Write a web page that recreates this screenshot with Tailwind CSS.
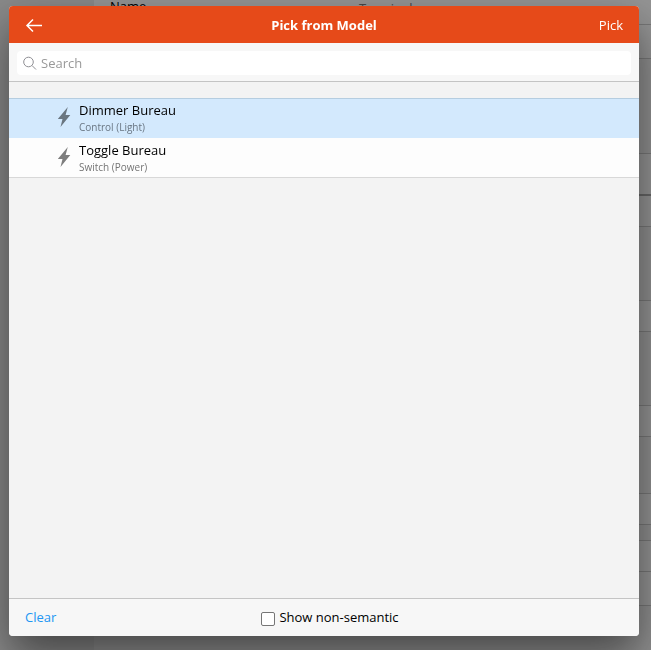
<!DOCTYPE html>
<html lang="en">
  <head>
    <meta charset="utf-8">
    <meta name="viewport" content="width=device-width, initial-scale=1">
    <title>Pick from Model</title>
    <script src="https://cdn.jsdelivr.net/npm/@tailwindcss/browser@4"></script>
  </head>
  <body class="h-screen overflow-hidden bg-[#efefef] font-['Open_Sans','Noto_Sans',sans-serif] text-[13px] text-black">
    <!-- settings page behind the popup -->
    <div class="flex h-full overflow-hidden">
      <aside class="w-[94px] shrink-0 bg-[#e4e4e4]"></aside>
      <main class="flex-1">
        <div class="flex h-[25px] items-start border-b border-[#c8c8c8] bg-[#f7f7f7] px-4 leading-3">
          <span class="w-[249px]">Name</span>
          <span class="pt-[2px] text-[#777]">Terminal</span>
        </div>
        <div class="h-[34px] border-b border-[#c8c8c8] bg-[#f7f7f7]"></div>
        <div class="mt-[94px] h-[43px] border-t border-b-2 border-t-[#c8c8c8] border-b-[#aaa] bg-[#f7f7f7]"></div>
        <div class="h-[31px] border-b border-[#c8c8c8] bg-[#f7f7f7]"></div>
        <div class="mt-[73px] h-8 border-y border-[#c8c8c8] bg-[#f7f7f7]"></div>
        <div class="mt-[73px] h-8 border-y border-[#c8c8c8] bg-[#f7f7f7]"></div>
        <div class="mt-14 h-8 border-y border-[#c8c8c8] bg-[#f7f7f7]"></div>
        <div class="mt-[15px] h-8 border-y border-[#c8c8c8] bg-[#f7f7f7]"></div>
        <div class="h-[34px] border-b border-[#c8c8c8] bg-[#f7f7f7]"></div>
      </main>
    </div>

    <!-- popup -->
    <div class="fixed inset-0 bg-black/40 pt-[6px] pr-3 pb-[14px] pl-[9px]">
      <div role="dialog" aria-labelledby="title" class="flex h-full flex-col overflow-hidden rounded bg-[#f3f3f3] shadow-[0_20px_44px_rgba(0,0,0,0.5)]">
        <header class="grid h-[37px] shrink-0 grid-cols-[1fr_auto_1fr] items-center bg-[#e64a19] px-4 text-white">
          <button type="button" aria-label="Back" class="justify-self-start">
            <svg class="h-4 w-[18px]" viewBox="0 0 18 16" fill="none" stroke="currentColor" stroke-width="1.5">
              <path d="M8 2.5 2 8.5l6 6M2 8.5h15"/>
            </svg>
          </button>
          <h1 id="title" class="pt-[2px] font-bold">Pick from Model</h1>
          <button type="button" class="justify-self-end pt-[2px]">Pick</button>
        </header>

        <form class="shrink-0 border-b border-[#c4c4c4] bg-[#f7f7f7] p-2 pb-[6px]">
          <label class="flex h-6 items-center gap-1 rounded bg-white px-[6px]">
            <svg class="h-[14px] w-[14px] shrink-0 text-[#8e8e93]" viewBox="0 0 14 14" fill="none" stroke="currentColor">
              <circle cx="5.5" cy="6" r="4.8"/>
              <path d="m9 9.5 4 4"/>
            </svg>
            <input type="text" placeholder="Search" aria-label="Search" class="w-full bg-transparent pt-px text-[13px] outline-none placeholder:text-[#999]">
          </label>
        </form>

        <div class="flex-1 overflow-auto pt-4">
          <ul class="border-y border-t-[#b5cde0] border-b-[#d8d8d8] bg-[#fdfdfd]">
            <li>
              <button type="button" class="flex h-[39px] w-full items-start gap-2 bg-[#d3e9fd] pt-[3px] pl-12 text-left">
                <svg class="mt-[5px] h-5 w-[14px] shrink-0 text-[#6a7680]" viewBox="0 0 14 20" fill="currentColor">
                  <path d="M10.8 0 .8 12h4.7L3.5 20 13.3 8H8.6z"/>
                </svg>
                <span>
                  <span class="block leading-[17px]">Dimmer Bureau</span>
                  <span class="block text-[10px] leading-4 text-[#697683]">Control (Light)</span>
                </span>
              </button>
            </li>
            <li>
              <button type="button" class="flex h-[39px] w-full items-start gap-2 pt-1 pl-12 text-left">
                <svg class="mt-[5px] h-5 w-[14px] shrink-0 text-[#7e7e7e]" viewBox="0 0 14 20" fill="currentColor">
                  <path d="M10.8 0 .8 12h4.7L3.5 20 13.3 8H8.6z"/>
                </svg>
                <span>
                  <span class="block leading-[17px]">Toggle Bureau</span>
                  <span class="block text-[10px] leading-4 text-[#757575]">Switch (Power)</span>
                </span>
              </button>
            </li>
          </ul>
        </div>

        <footer class="grid h-[38px] shrink-0 grid-cols-[1fr_auto_1fr] items-center border-t border-[#c4c4c4] bg-[#f7f7f7] px-4">
          <button type="button" class="justify-self-start text-[#2196f3]">Clear</button>
          <label class="ml-3 flex items-center gap-1">
            <input type="checkbox" class="mt-[2px] h-[14px] w-[14px] appearance-none rounded-[2px] border border-[#767676] bg-white checked:bg-[#2196f3]">
            Show non-semantic
          </label>
        </footer>
      </div>
    </div>
  </body>
</html>
